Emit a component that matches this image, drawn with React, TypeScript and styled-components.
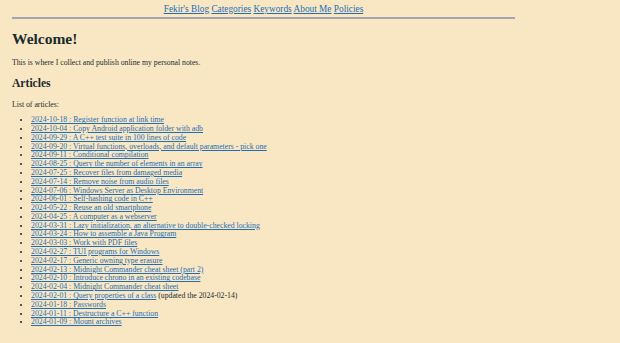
import React from "react";
import styled, { createGlobalStyle } from "styled-components";

const Global = createGlobalStyle`
  html, body { margin: 0; padding: 0; background: #f9e7c3; }
  body { font-family: "Liberation Serif", "Times New Roman", serif; color: #1b2b30; }
`;

const Page = styled.div`
  width: 503px;
  margin-left: 12px;
  padding-top: 3.8px;
  font-size: 7.75px;
`;

const Nav = styled.nav`
  text-align: center;
  font-size: 9.3px;
  line-height: 11px;
  padding-bottom: 2.2px;
  border-bottom: 2px solid #a3a4ac;
`;

const NavLink = styled.a`
  color: #1f6db5;
  text-decoration: underline;
`;

const Title = styled.h1`
  font-size: 15.5px;
  font-weight: bold;
  margin: 10.8px 0 0;
  line-height: 18px;
`;

const Text = styled.p<{ $gap: number }>`
  font-size: 7.75px;
  margin: ${(p) => p.$gap}px 0 0;
  line-height: 8.74px;
`;

const Section = styled.h2`
  font-size: 11.6px;
  font-weight: bold;
  margin: 8.9px 0 0;
  line-height: 13px;
`;

const List = styled.ul`
  margin: 6.6px 0 0;
  padding-left: 19px;
  font-size: 7.75px;
  line-height: 8.78px;
`;

const Item = styled.li``;

const ArticleLink = styled.a`
  color: #1f6db5;
  text-decoration: underline;
`;

const Note = styled.span`
  color: #1b2b30;
`;

const articles: { t: string; note?: string }[] = [
  { t: "2024-10-18 : Register function at link time" },
  { t: "2024-10-04 : Copy Android application folder with adb" },
  { t: "2024-09-29 : A C++ test suite in 100 lines of code" },
  { t: "2024-09-20 : Virtual functions, overloads, and default parameters - pick one" },
  { t: "2024-09-11 : Conditional compilation" },
  { t: "2024-08-25 : Query the number of elements in an array" },
  { t: "2024-07-25 : Recover files from damaged media" },
  { t: "2024-07-14 : Remove noise from audio files" },
  { t: "2024-07-06 : Windows Server as Desktop Environment" },
  { t: "2024-06-01 : Self-hashing code in C++" },
  { t: "2024-05-22 : Reuse an old smartphone" },
  { t: "2024-04-25 : A computer as a webserver" },
  { t: "2024-03-31 : Lazy initialization, an alternative to double-checked locking" },
  { t: "2024-03-24 : How to assemble a Java Program" },
  { t: "2024-03-03 : Work with PDF files" },
  { t: "2024-02-27 : TUI programs for Windows" },
  { t: "2024-02-17 : Generic owning type erasure" },
  { t: "2024-02-13 : Midnight Commander cheat sheet (part 2)" },
  { t: "2024-02-10 : Introduce chrono in an existing codebase" },
  { t: "2024-02-04 : Midnight Commander cheat sheet" },
  { t: "2024-02-01 : Query properties of a class", note: " (updated the 2024-02-14)" },
  { t: "2024-01-18 : Passwords" },
  { t: "2024-01-11 : Destructure a C++ function" },
  { t: "2024-01-09 : Mount archives" },
];

const navItems = ["Fekir's Blog", "Categories", "Keywords", "About Me", "Policies"];

export default function App() {
  return (
    <>
      <Global />
      <Page>
        <Nav>
          {navItems.map((n, i) => (
            <React.Fragment key={n}>
              {i > 0 && " "}
              <NavLink href="#">{n}</NavLink>
            </React.Fragment>
          ))}
        </Nav>
        <Title>Welcome!</Title>
        <Text $gap={11.2}>This is where I collect and publish online my personal notes.</Text>
        <Section>Articles</Section>
        <Text $gap={11.4}>List of articles:</Text>
        <List>
          {articles.map((a) => (
            <Item key={a.t}>
              <ArticleLink href="#">{a.t}</ArticleLink>
              {a.note && <Note>{a.note}</Note>}
            </Item>
          ))}
        </List>
      </Page>
    </>
  );
}
